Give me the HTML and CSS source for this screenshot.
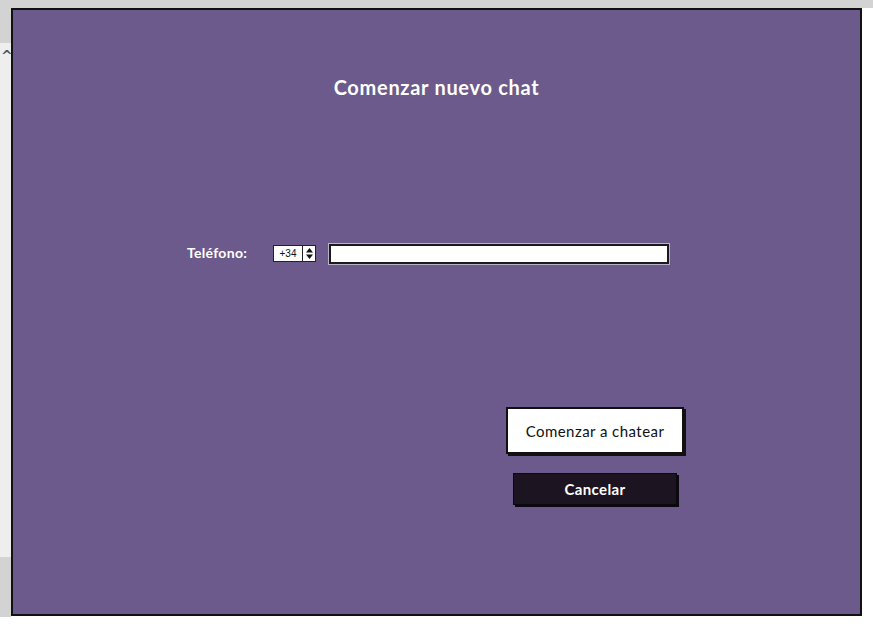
FILE: index.html
```html
<!DOCTYPE html>
<html lang="es">
<head>
<meta charset="utf-8">
<title>Comenzar nuevo chat</title>
<link rel="stylesheet" href="styles.css">
</head>
<body>
<div class="topbar"></div>
<div class="main">
  <div class="side">
    <div class="side-top"></div>
    <div class="side-mid"><span class="caret">&#94;</span></div>
    <div class="side-bot"></div>
  </div>
  <div class="panel">
    <h1 class="title">Comenzar nuevo chat</h1>
    <div class="form-row">
      <label class="label" for="tel">Teléfono:</label>
      <div class="spinner">
        <span class="spin-val">+34</span>
        <span class="spin-arrows">
          <svg width="9" height="13" viewBox="0 0 9 13"><path d="M4.5 1 L8 5.5 L1 5.5 Z M4.5 12 L8 7.5 L1 7.5 Z" fill="#111"/></svg>
        </span>
      </div>
      <div class="text-input" id="tel"></div>
    </div>
    <div class="actions">
      <button class="btn btn-primary">Comenzar a chatear</button>
      <button class="btn btn-dark">Cancelar</button>
    </div>
  </div>
  <div class="right"></div>
</div>
</body>
</html>
```
FILE: styles.css
```css
html, body {
  margin: 0;
  padding: 0;
  background: #ffffff;
  font-family: "Lato", "Noto Sans", sans-serif;
}
.topbar {
  height: 8px;
  background: #d3d3d3;
}
.main {
  display: flex;
  height: 609px;
}
.side {
  width: 11px;
  display: flex;
  flex-direction: column;
}
.side-top {
  height: 35px;
  background: #d3d3d3;
}
.side-mid {
  height: 514px;
  background: #eeeeee;
  position: relative;
}
.caret {
  position: absolute;
  left: 1px;
  top: 6px;
  font-size: 14px;
  font-weight: 700;
  color: #555;
  font-family: "DejaVu Sans", sans-serif;
  line-height: 14px;
}
.side-bot {
  height: 60px;
  background: #d3d3d3;
}
.panel {
  width: 847px;
  height: 604px;
  background: #6b5a8b;
  border: 2px solid #111111;
  display: flex;
  flex-direction: column;
}
.right {
  flex: 1;
}
.title {
  margin: 65px 0 0;
  text-align: center;
  color: #ffffff;
  font-size: 20px;
  font-weight: 700;
  line-height: 24px;
  letter-spacing: 0.7px;
}
.form-row {
  margin: 145px 0 0 174px;
  display: flex;
  align-items: center;
  height: 20px;
}
.label {
  color: #ffffff;
  font-size: 14px;
  font-weight: 700;
  width: 86px;
  letter-spacing: 0.3px;
  margin-top: -3px;
}
.spinner {
  display: flex;
  height: 17px;
  border: 1px solid #222;
  background: #fff;
  box-sizing: border-box;
  width: 43px;
  margin-top: -1px;
}
.spin-val {
  width: 28px;
  font-size: 10px;
  line-height: 15px;
  text-align: center;
  color: #111;
  font-family: "Liberation Sans", sans-serif;
  border-right: 1px solid #222;
}
.spin-arrows {
  flex: 1;
  display: flex;
  align-items: center;
  justify-content: center;
}
.text-input {
  margin-left: 13px;
  width: 340px;
  height: 20px;
  box-sizing: border-box;
  background: #fff;
  border: 2px solid #1a1a1a;
  outline: 1px solid #b9b2c8;
}
.actions {
  margin: 143px 0 0 493px;
  width: 178px;
  display: flex;
  flex-direction: column;
  align-items: center;
  gap: 19px;
}
.btn {
  font-family: "Lato", "Noto Sans", sans-serif;
  font-size: 15px;
  cursor: pointer;
  box-sizing: border-box;
  padding: 0;
}
.btn-primary {
  width: 178px;
  height: 47px;
  background: #ffffff;
  color: #111;
  border: 2px solid #111;
  box-shadow: 2px 2px 0 #111;
  letter-spacing: 0.45px;
}
.btn-dark {
  width: 164px;
  height: 32px;
  background: #1c1420;
  color: #ffffff;
  font-weight: 700;
  border: 1px solid #0c0810;
  box-shadow: 2px 2px 0 #0c0810;
  letter-spacing: 0.4px;
}
```
